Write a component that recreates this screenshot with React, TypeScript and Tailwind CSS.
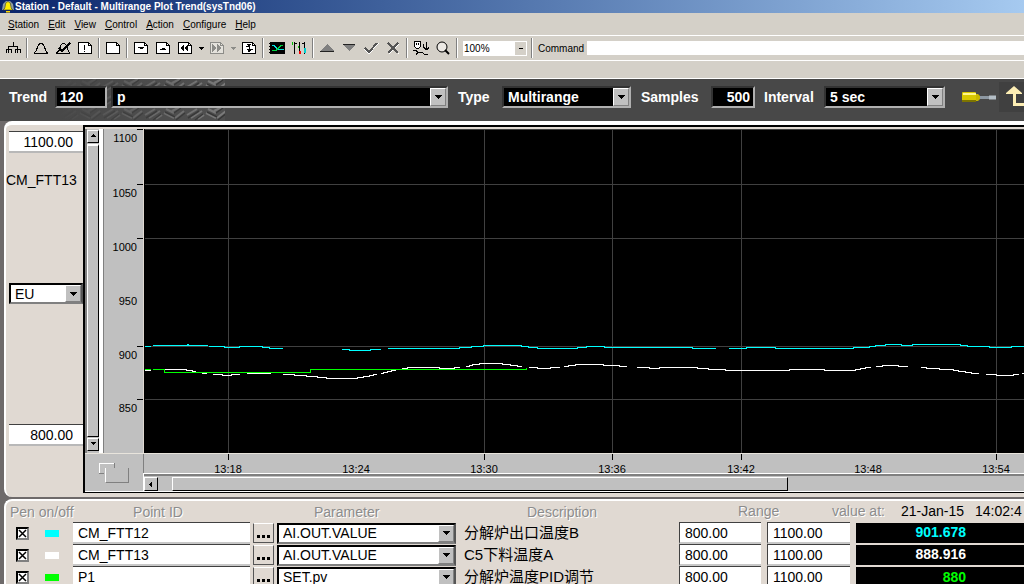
import { useState } from "react";
import type { ReactNode } from "react";
import clsx from "clsx";

const MENU = ["Station", "Edit", "View", "Control", "Action", "Configure", "Help"];

// plot area is 324px high, 1100 at the top and 800 at the bottom
const Y_LABELS = [
  { text: "1100", y: 0 },
  { text: "1050", y: 55 },
  { text: "1000", y: 109 },
  { text: "950", y: 163, noLine: true },
  { text: "900", y: 217 },
  { text: "850", y: 270 },
];

const X_LABELS = [
  { text: "13:18", x: 84 },
  { text: "13:24", x: 212, noLine: true },
  { text: "13:30", x: 340 },
  { text: "13:36", x: 468 },
  { text: "13:42", x: 597 },
  { text: "13:48", x: 724, noLine: true },
  { text: "13:54", x: 852 },
];

const CYAN_TRACE =
  "M0 217H6M8 216H63M42 215H44M64 217H80V218H95V217H118V218H125V219H138M197 220H205V221H226V220H236M243 219H315V218H327V217H339V216H377V217H384V218H393V219H433V218H442V217H460V218H548V219H571M584 219H602V218H631V219H709V218H725V217H731V216H741V215H757V216H768V215H816V216H823V217H845V218H867V217H2000";
const WHITE_TRACE =
  "M0 241H6M20 240H42V241H48V242H51M57 244H62M68 245H78V246H87V245H95M102 244H126M138 245H150V246H162V247H173V248H182V249H213V248H219V247H225V246H229V245H232M236 244H239V243H243V242H247V241H251M257 239H263V238H295V239H310V238H315M321 237H325V236H328V235H335V234H358V235H366V236H373V237H377M384 238H393V239H406V238H415M419 237H424V236H431V235H459V236H475V237H482M492 238H505V239H515V238H553V239H564V240H581V241H645V240H680V241H711V240H716V239H721V238H726M731 237H738V236H754V237H763M776 238H782V239H795V240H809V241H814V242H821V243H827V244H834M841 245H852V246H869V245H874M877 244H2000";
const GREEN_TRACE = "M0 240H6M8 240H20V243H166V240H382V238";

const ROWS = [
  { pen: "bg-[#00ffff]", color: "text-[#00ffff]", point: "CM_FTT12", param: "AI.OUT.VALUE", desc: "分解炉出口温度B", value: "901.678" },
  { pen: "bg-white", color: "text-white", point: "CM_FTT13", param: "AI.OUT.VALUE", desc: "C5下料温度A", value: "888.916" },
  { pen: "bg-[#00ff00]", color: "text-[#00ff00]", point: "P1", param: "SET.pv", desc: "分解炉温度PID调节", value: "880" },
];

function Icon({ children, w = 16 }: { children: ReactNode; w?: number }) {
  return (
    <svg width={w} height="16" viewBox={`0 0 ${w} 16`} fill="none" stroke="#000" shapeRendering="crispEdges">
      {children}
    </svg>
  );
}

function ToolButton({ label, children }: { label: string; children: ReactNode }) {
  return (
    <button type="button" aria-label={label} className="flex h-5 w-[22px] shrink-0 items-center justify-center">
      <Icon>{children}</Icon>
    </button>
  );
}

function DropButton({ label, color }: { label: string; color: string }) {
  return (
    <button type="button" aria-label={label} className="flex h-5 w-[10px] shrink-0 items-center justify-center">
      <svg width="5" height="3" viewBox="0 0 5 3" fill={color} shapeRendering="crispEdges">
        <path d="M0 0h5v1H4v1H3v1H2V2H1V1H0z" />
      </svg>
    </button>
  );
}

function Separator() {
  return <div className="mx-[2px] h-5 w-[2px] shrink-0 border-l border-r border-l-[#808080] border-r-white" />;
}

function Page({ grey }: { grey?: boolean }) {
  return (
    <>
      <path d="M1.500 2.500h10l3 3v8h-13z" fill={grey ? "#e4e2dc" : "#fff"} stroke={grey ? "#8c8c88" : "#000"} />
      <path d="M11.500 2.500v3h3" stroke={grey ? "#8c8c88" : "#000"} />
    </>
  );
}

type ComboProps = { label: string; value: string; dark?: boolean; className?: string };

// drop-down with a raised arrow button on its right
function Combo({ label, value, dark, className }: ComboProps) {
  return (
    <div
      className={clsx(
        "relative border-2",
        dark
          ? "h-[22px] border-t-[#333333] border-l-[#333333] border-r-[#b0b0b0] border-b-[#b0b0b0] bg-black"
          : "h-[21px] border-t-black border-l-black border-r-[#555555] border-b-[#808080] bg-white",
        className
      )}
    >
      <select
        aria-label={label}
        className={clsx(
          "block h-full w-full appearance-none bg-transparent text-sm leading-4 outline-none",
          dark ? "pl-1 font-bold text-white" : "pl-1 text-black"
        )}
      >
        <option>{value}</option>
      </select>
      <span className="pointer-events-none absolute top-0 right-0 flex h-full w-4 items-center justify-center border border-t-white border-r-[#808080] border-b-[#808080] border-l-white bg-[#c0c0c0]">
        <svg width="7" height="4" viewBox="0 0 7 4" shapeRendering="crispEdges">
          <path d="M0 0h7v1H6v1H5v1H4v1H3V3H2V2H1V1H0z" />
        </svg>
      </span>
    </div>
  );
}

function ScrollArrow({ label, dir, className }: { label: string; dir: "up" | "down" | "left"; className: string }) {
  const d = { up: "M2 0h1v1h1v1h1v1H0V2h1V1h1z", down: "M0 0h5v1H4v1H3v1H2V2H1V1H0z", left: "M3 0v5H2V4H1V3H0V2h1V1h1V0z" }[dir];
  return (
    <button
      type="button"
      aria-label={label}
      className={clsx(
        "flex shrink-0 items-center justify-center border border-t-white border-r-black border-b-black border-l-white bg-[#c0c0c0]",
        className
      )}
    >
      <svg width="5" height="5" viewBox="0 0 5 5" shapeRendering="crispEdges">
        <path d={d} />
      </svg>
    </button>
  );
}

function TitleBar() {
  return (
    <div className="flex h-[13px] items-center overflow-hidden bg-linear-to-r from-[#0a246a] to-[#a6caf0] pl-px">
      <svg width="14" height="12" viewBox="0 0 14 12">
        <path d="M1 9L2 3L5 0h4l3 3l1 6z" fill="#8fa0a0" />
        <path d="M2 9c2-1 2-3 2.500-6S9 0 9.500 3S10 8 12 9z" fill="#ffee00" stroke="#333" strokeWidth=".6" />
        <path d="M5 10h4v1.500H5z" fill="#ffd800" />
      </svg>
      <h1 className="text-[10px] leading-[11px] font-bold whitespace-nowrap text-white">
        Station - Default - Multirange Plot Trend(sysTnd06)
      </h1>
    </div>
  );
}

function MenuBar() {
  return (
    <nav className="flex h-[22px] items-center gap-[9px] pl-2 text-[10px]">
      {MENU.map((item) => (
        <button key={item} type="button">
          <span className="underline">{item[0]}</span>
          {item.slice(1)}
        </button>
      ))}
    </nav>
  );
}

function Toolbar() {
  return (
    <div className="flex h-[26px] items-center border-t border-b border-white pl-[2px]">
      <ToolButton label="Station map">
        <path d="M8.500 2v5M3.500 10V6.500h9V10M1.500 13V9.500h5V13M3.500 9v4M10.500 13V9.500h5V13M12.500 9v4" />
      </ToolButton>
      <Separator />
      <ToolButton label="Alarms">
        <path d="M1 13.500h14M1.500 13l1.500-2l2-5l2-3h2l2 3l2 5l1.500 2" />
      </ToolButton>
      <ToolButton label="Acknowledge">
        <path d="M1 13.500h14M1.500 13l3-3l1-4l2-3h2l2 3l2 5l1 2" />
        <path d="M4 8l3 3l8-8" strokeWidth="1.500" />
      </ToolButton>
      <ToolButton label="Messages">
        <Page />
        <path d="M7.500 5v5M7.500 11v1" />
      </ToolButton>
      <Separator />
      <ToolButton label="Page">
        <Page />
      </ToolButton>
      <Separator />
      <ToolButton label="Page down">
        <Page />
        <path d="M5 7h6v1h-1v1H7V8H5z" fill="#000" stroke="none" />
      </ToolButton>
      <ToolButton label="Page up">
        <Page />
        <path d="M5 10h6V9h-1V8H7v1H5z" fill="#000" stroke="none" />
      </ToolButton>
      <ToolButton label="Back">
        <Page />
        <path d="M7 4v8L3 8zM11 4v8L7 8z" fill="#000" stroke="none" />
      </ToolButton>
      <DropButton label="Back history" color="#000" />
      <ToolButton label="Forward">
        <Page grey />
        <path d="M3 4v8l4-4zM8 4v8l4-4z" fill="#8c8c88" stroke="none" />
      </ToolButton>
      <DropButton label="Forward history" color="#8c8c88" />
      <ToolButton label="Reload">
        <Page />
        <path d="M8.500 4v8M5 6.500h3M8 9.500h4" />
        <path d="M6 4l4 0l-2 3zM6 9h5l-3 4z" fill="#000" stroke="none" />
      </ToolButton>
      <Separator />
      <ToolButton label="Trend">
        <path d="M1 2h15v12H1z" fill="#000" stroke="none" />
        <path d="M0 3.500h2M0 6.500h2M0 9.500h2M0 12.500h2" />
        <path d="M3 5.500h2l4 4h6" stroke="#00e0e0" strokeWidth="1.500" />
        <path d="M3 10.500h4l5-5h2" stroke="#00d040" strokeWidth="1.500" />
      </ToolButton>
      <ToolButton label="Group">
        <path d="M3.500 2v12M4 3.500h2M8.500 2v12M13.500 2v12M11 3.500h2" strokeWidth="1.500" />
        <path d="M1.500 2v3M7.500 6v2" stroke="#00c000" />
        <path d="M9 11v3" stroke="#f00" strokeWidth="2" />
        <path d="M14 8v5" stroke="#00d0d0" strokeWidth="2" />
      </ToolButton>
      <Separator />
      <ToolButton label="Raise">
        <path d="M8 4l7 7H1z" fill="#808080" stroke="none" />
        <path d="M1 11.500h14" stroke="#222" />
      </ToolButton>
      <ToolButton label="Lower">
        <path d="M8 11l6-6H2z" fill="#808080" stroke="none" />
        <path d="M2 4.500h12" stroke="#222" />
      </ToolButton>
      <ToolButton label="Enter">
        <path d="M2 9l4 4l9-10" stroke="#fff" strokeWidth="2" />
        <path d="M2 8l4 4l8-9" stroke="#555" strokeWidth="2" />
      </ToolButton>
      <ToolButton label="Cancel">
        <path d="M4 4l10 10M14 4L4 14" stroke="#fff" />
        <path d="M3 3l10 10M13 3L3 13" stroke="#555" strokeWidth="1.500" />
      </ToolButton>
      <Separator />
      <ToolButton label="Operator">
        <path d="M1.500 1.500h6v5l-2 2h-2l-2-2z" fill="#fff" />
        <path d="M3.500 3v2M5.500 3v2M0 10.500h3l2 2l-2 2M6 12.500h3l3 2h3M13.500 2v8M10.500 4v3l2 2h2l2-2V5" />
      </ToolButton>
      <ToolButton label="Zoom">
        <circle cx="7" cy="7" r="5" fill="#ece9e4" shapeRendering="auto" />
        <path d="M10 10l4 4" strokeWidth="2" shapeRendering="auto" />
      </ToolButton>
      <Separator />
      <div className="relative ml-[3px] h-[15px] w-16 shrink-0 bg-white">
        <select aria-label="Zoom level" className="block h-full w-full appearance-none pl-px text-[10px] outline-none">
          <option>100%</option>
        </select>
        <span className="pointer-events-none absolute top-px right-px flex h-[13px] w-[11px] items-center justify-center bg-[#d4d0c8]">
          <span className="h-px w-1 bg-black" />
        </span>
      </div>
      <div className="ml-[2px] flex">
        <Separator />
      </div>
      <label htmlFor="command" className="ml-[3px] shrink-0 text-[10px]">
        Command
      </label>
      <input id="command" type="text" className="ml-[3px] h-[14px] min-w-0 flex-1 bg-white px-1 text-[10px] outline-none" />
    </div>
  );
}

// stone relief that fades in behind the left part of the header
function Relief() {
  return (
    <svg className="absolute top-0 left-[60px] h-full w-[165px]" aria-hidden="true">
      <defs>
        <pattern id="relief" width="42" height="14" patternUnits="userSpaceOnUse">
          <rect width="42" height="14" fill="#505050" />
          <path d="M1 8l10-6M5 11l11-7M12 12l6-4M22 2l8 4M20 6l10 5M31 11l9-7M28 4l8-4" stroke="#808080" strokeWidth="2" />
          <path d="M2 11l11-7M9 13l8-6M21 5l10 5M32 13l9-7M30 6l7-5" stroke="#333" strokeWidth="1.500" />
        </pattern>
        <linearGradient id="fade">
          <stop offset="0" stopColor="#484848" />
          <stop offset="0.600" stopColor="#484848" stopOpacity=".4" />
          <stop offset="1" stopColor="#484848" stopOpacity=".1" />
        </linearGradient>
      </defs>
      <rect width="165" height="42" fill="url(#relief)" />
      <rect width="165" height="42" fill="url(#fade)" />
    </svg>
  );
}

function TrendHeader() {
  const field =
    "h-[22px] border-2 border-t-[#333333] border-l-[#333333] border-r-[#b0b0b0] border-b-[#b0b0b0] bg-black text-sm font-bold text-white outline-none";
  return (
    <div className="relative h-[43px] border-t border-white bg-[#484848]">
      <Relief />
      <div className="relative flex h-9 items-center overflow-hidden pl-[9px] text-sm font-bold text-white">
        <label htmlFor="trend" className="w-[46px] shrink-0">
          Trend
        </label>
        <input id="trend" defaultValue="120" className={clsx(field, "w-[52px] shrink-0 pl-[3px]")} />
        <Combo label="Trend name" value="p" dark className="ml-1 min-w-20 flex-1" />
        <span className="ml-[10px] w-11 shrink-0">Type</span>
        <Combo label="Type" value="Multirange" dark className="w-[129px] shrink-0" />
        <label htmlFor="samples" className="ml-[10px] w-[70px] shrink-0">
          Samples
        </label>
        <input id="samples" defaultValue="500" className={clsx(field, "w-11 shrink-0 pr-[3px] text-right")} />
        <span className="ml-[9px] w-[60px] shrink-0">Interval</span>
        <Combo label="Interval" value="5 sec" dark className="w-[121px] shrink-0" />
        <button type="button" aria-label="Configure trend" className="ml-[17px] shrink-0">
          <svg width="34" height="12" viewBox="0 0 34 12">
            <rect x="0" y="1" width="14" height="10" rx="1" fill="#d8c800" />
            <path d="M1 3h13" stroke="#fff68a" strokeWidth="2" />
            <path d="M0 10h14" stroke="#7d7400" strokeWidth="2" />
            <path d="M14 3h2l2 2v3l-2 2h-2z" fill="#c8b800" />
            <path d="M18 6.500h16" stroke="#8d98a2" strokeWidth="3" />
            <path d="M27 6.500h7" stroke="#b4bec6" strokeWidth="4" />
          </svg>
        </button>
        <button type="button" aria-label="Up one level" className="ml-[3px] flex h-[30px] w-[25px] shrink-0 justify-end bg-[#404040]">
          <svg width="18" height="22" viewBox="0 0 18 22" className="mt-1" fill="#fdeeb4">
            <path d="M8 0l8 7v1h-6v9h8v3H7V8H0V7z" />
          </svg>
        </button>
      </div>
    </div>
  );
}

function RangeSide() {
  const box = "h-[22px] w-[74px] border-t border-t-[#404040] border-b-2 border-b-[#b8b8b8] bg-white pr-[10px] text-right text-sm outline-none";
  return (
    <div className="flex w-[77px] shrink-0 flex-col items-end">
      <input aria-label="Range high" defaultValue="1100.00" className={clsx(box, "mt-[6px]")} />
      <div className="mt-[18px] h-[18px] w-full text-sm leading-[18px]">CM_FTT13</div>
      <Combo label="Units" value="EU" className="mt-[94px] w-[74px]" />
      <input aria-label="Range low" defaultValue="800.00" className={clsx(box, "mt-[120px]")} />
    </div>
  );
}

function Chart() {
  return (
    <svg className="block h-[324px] w-full bg-black" shapeRendering="crispEdges" fill="none">
      <g transform="translate(0.5 0.5)">
        {Y_LABELS.filter((l) => !l.noLine).map((l) => (
          <line key={l.text} x1="0" x2="100%" y1={l.y} y2={l.y} stroke="#404040" />
        ))}
        {X_LABELS.filter((l) => !l.noLine).map((l) => (
          <line key={l.text} x1={l.x} x2={l.x} y1="0" y2="324" stroke="#404040" />
        ))}
        <path d={CYAN_TRACE} stroke="#00ffff" />
        <path d={WHITE_TRACE} stroke="#ffffff" />
        <path d={GREEN_TRACE} stroke="#00ff00" />
      </g>
    </svg>
  );
}

function PlotPanel() {
  return (
    <section className="relative ml-1 flex rounded-l-lg border-t-4 border-l-2 border-white bg-[#e0d9d2] pb-1">
      <RangeSide />
      <div className="flex min-w-0 flex-1 flex-col border-t-2 border-b border-l-2 border-black bg-[#c0c0c0]">
        <div className="flex border-t-2 border-[#e0d9d2]">
          <div className="flex w-[18px] shrink-0 flex-col border-r-4 border-l-2 border-r-white border-l-[#808080] pt-px pb-[2px]">
            <ScrollArrow label="Scroll up" dir="up" className="h-[13px]" />
            <div className="mt-px flex-1 border-t-2 border-r border-b border-l border-t-white border-r-black border-b-black border-l-white" />
            <ScrollArrow label="Scroll down" dir="down" className="mt-px h-[13px]" />
          </div>
          <svg
            className="block h-[324px] w-[41px] shrink-0 border-r border-l border-r-[#e0d9d2] border-l-[#808080]"
            fontSize="11"
            textAnchor="end"
          >
            {Y_LABELS.map((l) => (
              <g key={l.text}>
                {!l.noLine && <path d={`M33 ${l.y + 0.5}h6`} stroke="#000" />}
                <text x="33" y={l.y + 13}>
                  {l.text}
                </text>
              </g>
            ))}
          </svg>
          <div className="min-w-0 flex-1">
            <Chart />
          </div>
        </div>
        <div className="flex h-[39px] border-t border-b border-t-[#e8e4dc] border-b-white">
          <button type="button" aria-label="Toggle view" className="w-[59px] shrink-0 border-r border-r-[#808080]">
            <svg width="32" height="22" viewBox="0 0 32 22" className="ml-[13px]" fill="none" shapeRendering="crispEdges">
              <path d="M5.500 11.500h-4v-10h15" stroke="#fff" />
              <path d="M16.500 1v5M1 11.500h5M7.500 20.500h23V6" stroke="#808080" />
              <path d="M7.500 6v14" stroke="#fff" />
            </svg>
          </button>
          <div className="flex min-w-0 flex-1 flex-col">
            <svg className="block h-5 w-full" fontSize="11" textAnchor="middle">
              {X_LABELS.map((l) => (
                <g key={l.text}>
                  {!l.noLine && <path d={`M${l.x + 0.5} 0v6`} stroke="#000" />}
                  <text x={l.x} y="19">
                    {l.text}
                  </text>
                </g>
              ))}
            </svg>
            <div className="flex flex-1 border-t-2 border-t-[#808080] outline outline-white">
              <ScrollArrow label="Scroll left" dir="left" className="mt-px w-[14px]" />
              <div className="mt-px ml-[14px] w-[70%] border border-t-white border-r-black border-b-black border-l-white" />
            </div>
          </div>
        </div>
      </div>
    </section>
  );
}

function PenCheck({ label }: { label: string }) {
  const [on, setOn] = useState(true);
  return (
    <span className="relative block h-[13px] w-[13px]">
      <input
        type="checkbox"
        aria-label={label}
        checked={on}
        onChange={() => setOn(!on)}
        className="block h-[13px] w-[13px] appearance-none border-2 border-t-black border-r-[#808080] border-b-[#808080] border-l-black bg-white"
      />
      {on && (
        <svg className="pointer-events-none absolute inset-0" width="13" height="13" viewBox="0 0 13 13">
          <path d="M3 3l7 7M10 3l-7 7" stroke="#000" strokeWidth="1.500" />
        </svg>
      )}
    </span>
  );
}

function PenTable() {
  const th = "p-0 font-normal text-[#8c8c8c] [text-shadow:1px_1px_0_#ffffff]";
  const box = "block h-[22px] border-t border-t-[#404040] border-b-2 border-b-[#c8c8c8] bg-white pl-[5px] text-sm outline-none";
  return (
    <section className="mt-[2px] ml-1 overflow-hidden rounded-tl-lg border-t-2 border-l-2 border-white bg-[#e0d9d2]">
      <table className="w-full table-fixed border-collapse text-sm whitespace-nowrap">
        <colgroup>
          <col className="w-[67px]" />
          <col className="w-[180px]" />
          <col className="w-6" />
          <col className="w-[180px]" />
          <col />
          <col className="w-[88px]" />
          <col className="w-[89px]" />
          <col className="w-[168px]" />
        </colgroup>
        <thead>
          <tr className="h-[21px] align-middle">
            <th className={clsx(th, "pl-1 text-left")}>Pen on/off</th>
            <th className={clsx(th, "pr-[10px]")}>Point ID</th>
            <th className="p-0" />
            <th className={clsx(th, "pl-[37px] text-left")}>Parameter</th>
            <th className={clsx(th, "pl-[70px] text-left")}>Description</th>
            <th colSpan={3} className={clsx(th, "text-left")}>
              <div className="flex overflow-hidden pl-[59px]">
                <span className="w-[94px] shrink-0">Range</span>
                <span className="w-[69px] shrink-0">value at:</span>
                <span className="w-[74px] shrink-0 text-black [text-shadow:none]">21-Jan-15</span>
                <span className="text-black [text-shadow:none]">14:02:4</span>
              </div>
            </th>
          </tr>
        </thead>
        <tbody>
          {ROWS.map((row) => (
            <tr key={row.point} className="h-[22px]">
              <td className="p-0">
                <div className="flex items-center gap-4 pl-[10px]">
                  <PenCheck label={`Pen ${row.point}`} />
                  <span className={clsx("h-[7px] w-[14px]", row.pen)} />
                </div>
              </td>
              <td className="p-0">
                <input aria-label="Point ID" defaultValue={row.point} className={clsx(box, "w-[177px]")} />
              </td>
              <td className="p-0">
                <button
                  type="button"
                  aria-label="Browse points"
                  className="flex h-5 w-[21px] items-end justify-center gap-[2px] border border-t-white border-r-[#555555] border-b-[#555555] border-l-[#555555] pb-1"
                >
                  <i className="h-[3px] w-[3px] bg-black" />
                  <i className="h-[3px] w-[3px] bg-black" />
                  <i className="h-[3px] w-[3px] bg-black" />
                </button>
              </td>
              <td className="p-0">
                <Combo label="Parameter" value={row.param} className="w-[179px]" />
              </td>
              <td className="p-0 pl-[7px] text-[15px] leading-5">{row.desc}</td>
              <td className="p-0">
                <input aria-label="Range low" defaultValue="800.00" className={clsx(box, "w-[82px] border-l border-l-[#404040]")} />
              </td>
              <td className="p-0">
                <input aria-label="Range high" defaultValue="1100.00" className={clsx(box, "w-[83px] border-l border-l-[#404040]")} />
              </td>
              <td className={clsx("border-t-2 border-[#e0d9d2] bg-black p-0 pr-[58px] text-right font-bold", row.color)}>
                <span className="block h-5 leading-[18px]">{row.value}</span>
              </td>
            </tr>
          ))}
        </tbody>
      </table>
    </section>
  );
}

export default function App() {
  return (
    <main className="h-screen overflow-hidden bg-[#6e6a6a] font-['Liberation_Sans','Noto_Sans_CJK_SC',sans-serif] text-black">
      <header className="bg-[#d4d0c8]">
        <TitleBar />
        <MenuBar />
        <Toolbar />
        <div className="h-[17px]" />
      </header>
      <TrendHeader />
      <PlotPanel />
      <PenTable />
    </main>
  );
}
